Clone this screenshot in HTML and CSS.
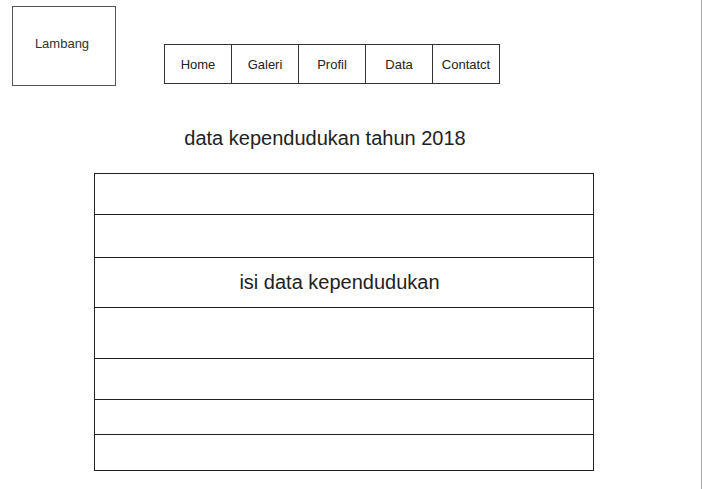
FILE: index.html
```html
<!DOCTYPE html>
<html lang="id">
<head>
<meta charset="utf-8">
<title>data kependudukan</title>
<link rel="stylesheet" href="styles.css">
</head>
<body>
<div class="page">
  <header class="header">
    <div class="logo">Lambang</div>
    <nav class="nav">
      <div class="nav-item">Home</div>
      <div class="nav-item">Galeri</div>
      <div class="nav-item">Profil</div>
      <div class="nav-item">Data</div>
      <div class="nav-item">Contatct</div>
    </nav>
  </header>
  <main class="main">
    <h1 class="title">data kependudukan tahun 2018</h1>
    <div class="table">
      <div class="row r1"></div>
      <div class="row r2"></div>
      <div class="row r3"><span class="row-text">isi data kependudukan</span></div>
      <div class="row r4"></div>
      <div class="row r5"></div>
      <div class="row r6"></div>
      <div class="row r7"></div>
    </div>
  </main>
</div>
</body>
</html>
```

FILE: styles.css
```css
html, body {
  margin: 0;
  padding: 0;
  background: #fff;
}

body {
  font-family: "Liberation Sans", Arial, sans-serif;
  color: #222;
}

.page {
  box-sizing: border-box;
  width: 702px;
  min-height: 100vh;
  border-right: 1px solid #a9a9a9;
  padding-top: 6px;
}

.header {
  display: flex;
  align-items: flex-start;
}

.logo {
  box-sizing: border-box;
  width: 104px;
  height: 80px;
  margin-left: 12px;
  border: 1px solid #555;
  display: flex;
  align-items: center;
  justify-content: center;
  padding-bottom: 5px;
  padding-right: 4px;
  font-size: 13px;
  color: #333;
}

.nav {
  display: flex;
  margin-left: 48px;
  margin-top: 38px;
  border: 1px solid #333;
  height: 40px;
  box-sizing: border-box;
}

.nav-item {
  width: 66px;
  display: flex;
  align-items: center;
  justify-content: center;
  font-size: 13px;
  color: #222;
}

.nav-item + .nav-item {
  border-left: 1px solid #333;
}

.main {
  margin-left: 94px;
  width: 500px;
}

.title {
  margin: 41px 0 0 0;
  padding-right: 38px;
  text-align: center;
  font-size: 20px;
  font-weight: normal;
  line-height: 23px;
  color: #222;
}

.table {
  margin-top: 23px;
  border: 1px solid #222;
  border-bottom: none;
}

.row {
  box-sizing: border-box;
  border-bottom: 1px solid #222;
  display: flex;
  align-items: center;
  justify-content: center;
}

.r1 { height: 41px; }
.r2 { height: 43px; }
.r3 { height: 50px; }
.r4 { height: 51px; }
.r5 { height: 41px; }
.r6 { height: 35px; }
.r7 { height: 36px; }

.row-text {
  font-size: 20px;
  line-height: 23px;
  padding-right: 9px;
  color: #222;
}
```
